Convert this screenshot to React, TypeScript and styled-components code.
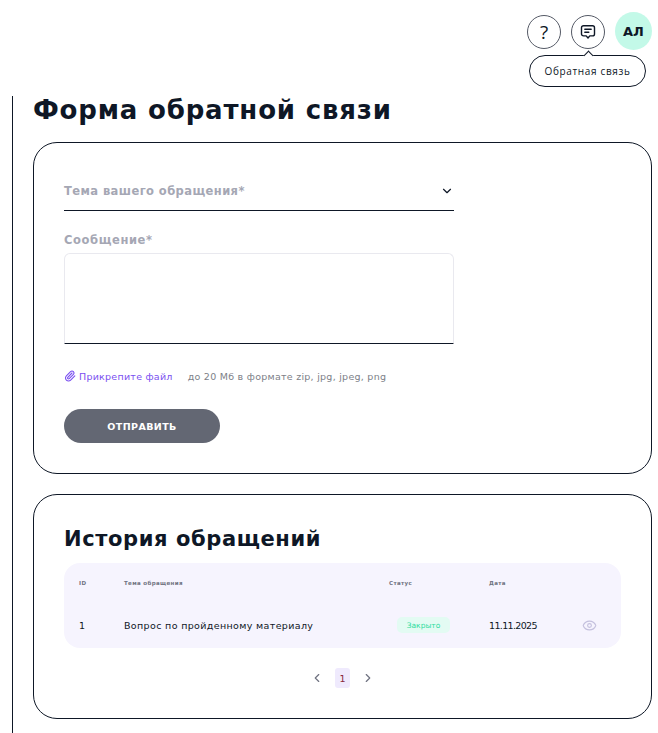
import styled, { createGlobalStyle } from "styled-components";
import { ChevronDown, ChevronLeft, ChevronRight, Eye, Paperclip } from "lucide-react";

const GlobalStyle = createGlobalStyle`
  html, body {
    margin: 0;
    padding: 0;
    background: #fff;
    color: #0e1726;
    font-family: "DejaVu Sans", "Liberation Sans", sans-serif;
  }
`;

const TopBar = styled.header`
  height: 96px;
  box-sizing: border-box;
  padding: 12px 6px 0 0;
  display: flex;
  justify-content: flex-end;
  align-items: flex-start;
  gap: 10px;
`;

const RoundButton = styled.button`
  position: relative;
  width: 34px;
  height: 34px;
  margin-top: 3px;
  padding: 0;
  border: 1px solid #555a66;
  border-radius: 50%;
  background: #fff;
  display: flex;
  align-items: center;
  justify-content: center;
  color: #0e1726;
  font-family: "Open Sans", sans-serif;
  font-size: 19px;
`;

const Avatar = styled.div`
  width: 37px;
  height: 38px;
  border-radius: 50%;
  background: #c3f9e8;
  display: flex;
  align-items: center;
  justify-content: center;
  font-size: 13px;
  font-weight: 700;
`;

const Tooltip = styled.div`
  position: absolute;
  top: 39px;
  left: -43px;
  width: 117px;
  height: 32px;
  box-sizing: border-box;
  border: 1px solid #0e1726;
  border-radius: 16px;
  background: #fff;
  display: flex;
  align-items: center;
  justify-content: center;
  font-size: 10px;
  letter-spacing: 0.65px;
  white-space: nowrap;

  &::before {
    content: "";
    position: absolute;
    top: -4px;
    left: 55px;
    width: 6px;
    height: 6px;
    background: #fff;
    border-left: 1px solid #0e1726;
    border-top: 1px solid #0e1726;
    transform: rotate(45deg);
  }
`;

const Content = styled.main`
  margin-left: 12px;
  padding: 0 6px 15px 20px;
  border-left: 1px solid #0e1726;
  display: flex;
  flex-direction: column;
`;

const PageTitle = styled.h1`
  margin: 0 0 16px;
  height: 30px;
  font-size: 26px;
  line-height: 28px;
  font-weight: 700;
  letter-spacing: 0.82px;
`;

const Card = styled.section`
  border: 1px solid #0e1726;
  border-radius: 24px;
  box-sizing: border-box;
  padding: 0 30px;
`;

const FormCard = styled(Card)`
  height: 332px;
  padding-top: 31px;
  margin-bottom: 20px;
`;

const HistoryCard = styled(Card)`
  height: 225px;
  padding-top: 30px;
`;

const SelectRow = styled.div`
  width: 390px;
  height: 37px;
  box-sizing: border-box;
  padding: 0 0 2px 0;
  border-bottom: 1px solid #0e1726;
  display: flex;
  align-items: center;
  justify-content: space-between;
`;

const FieldLabel = styled.span`
  color: #a5a7b4;
  font-size: 11.5px;
  font-weight: 700;
  letter-spacing: 0.42px;
`;

const MessageLabel = styled(FieldLabel)`
  display: block;
  margin-top: 22px;
  line-height: 14px;
  letter-spacing: 0.6px;
`;

const MessageBox = styled.div`
  width: 390px;
  height: 91px;
  margin-top: 6px;
  box-sizing: border-box;
  border: 1px solid #e9e9ef;
  border-bottom: 1px solid #0e1726;
  border-radius: 6px 6px 0 0;
`;

const AttachRow = styled.div`
  margin-top: 25px;
  height: 14px;
  display: flex;
  align-items: center;
  font-size: 9.5px;
`;

const AttachLink = styled.span`
  display: flex;
  align-items: center;
  gap: 3px;
  color: #7a4ff0;
  margin-right: 15px;
  letter-spacing: 0.25px;
`;

const AttachHint = styled.span`
  color: #7d7f88;
  letter-spacing: 0.26px;
`;

const SubmitButton = styled.button`
  display: block;
  width: 156px;
  height: 34px;
  margin-top: 26px;
  border: 0;
  border-radius: 17px;
  background: #636773;
  color: #fff;
  font-family: inherit;
  font-size: 9.5px;
  font-weight: 700;
  letter-spacing: 0.4px;
`;

const SectionTitle = styled.h2`
  margin: 0 0 10px;
  height: 28px;
  font-size: 21px;
  line-height: 28px;
  font-weight: 700;
  letter-spacing: 0.6px;
`;

const Table = styled.div`
  height: 85px;
  padding-left: 15px;
  border-radius: 16px;
  background: #f6f4fe;
  display: grid;
  grid-template-columns: 45px 265px 100px 93px 1fr;
  grid-template-rows: 39px 46px;
  align-items: center;
`;

const HeadCell = styled.span`
  color: #6f7280;
  font-size: 5.5px;
  font-weight: 700;
  letter-spacing: 0.35px;
`;

const Cell = styled.span`
  font-size: 9.5px;
  letter-spacing: 0.35px;
`;

const DateCell = styled(Cell)`
  letter-spacing: -0.65px;
`;

const StatusBadge = styled.span`
  margin-left: 8px;
  width: 53px;
  height: 16px;
  border-radius: 5px;
  background: #e3fbf3;
  color: #2fdc9f;
  font-size: 7.5px;
  display: flex;
  align-items: center;
  justify-content: center;
`;

const Pagination = styled.nav`
  margin-top: 20px;
  display: flex;
  justify-content: center;
  align-items: center;
  gap: 11px;
  color: #6f7280;
`;

const PageNumber = styled.span`
  width: 15px;
  height: 20px;
  border-radius: 3px;
  background: #efeafd;
  color: #8a2a3a;
  font-size: 9.5px;
  display: flex;
  align-items: center;
  justify-content: center;
`;

function FeedbackIcon() {
  return (
    <svg width="16" height="16" viewBox="0 0 16 16" fill="none" stroke="#0e1726" strokeWidth="1.4" strokeLinejoin="round" strokeLinecap="round">
      <path d="M3.5 1.7h9a2 2 0 0 1 2 2v6.2a2 2 0 0 1-2 2h-2.700L8 14l-1.800-2.100H3.500a2 2 0 0 1-2-2V3.700a2 2 0 0 1 2-2z" />
      <path d="M4.800 5.200h6.400M4.800 8.200h4" />
    </svg>
  );
}

export default function App() {
  return (
    <>
      <GlobalStyle />
      <TopBar>
        <RoundButton>?</RoundButton>
        <RoundButton>
          <FeedbackIcon />
          <Tooltip>Обратная связь</Tooltip>
        </RoundButton>
        <Avatar>АЛ</Avatar>
      </TopBar>
      <Content>
        <PageTitle>Форма обратной связи</PageTitle>
        <FormCard>
          <SelectRow>
            <FieldLabel>Тема вашего обращения*</FieldLabel>
            <ChevronDown size={14} strokeWidth={2} />
          </SelectRow>
          <MessageLabel>Сообщение*</MessageLabel>
          <MessageBox />
          <AttachRow>
            <AttachLink>
              <Paperclip size={12} strokeWidth={2.2} />
              Прикрепите файл
            </AttachLink>
            <AttachHint>до 20 Мб в формате zip, jpg, jpeg, png</AttachHint>
          </AttachRow>
          <SubmitButton>ОТПРАВИТЬ</SubmitButton>
        </FormCard>
        <HistoryCard>
          <SectionTitle>История обращений</SectionTitle>
          <Table>
            <HeadCell>ID</HeadCell>
            <HeadCell>Тема обращения</HeadCell>
            <HeadCell>Статус</HeadCell>
            <HeadCell>Дата</HeadCell>
            <span />
            <Cell>1</Cell>
            <Cell>Вопрос по пройденному материалу</Cell>
            <StatusBadge>Закрыто</StatusBadge>
            <DateCell>11.11.2025</DateCell>
            <Eye size={15} strokeWidth={1.8} color="#c4c0de" />
          </Table>
          <Pagination>
            <ChevronLeft size={14} />
            <PageNumber>1</PageNumber>
            <ChevronRight size={14} />
          </Pagination>
        </HistoryCard>
      </Content>
    </>
  );
}
